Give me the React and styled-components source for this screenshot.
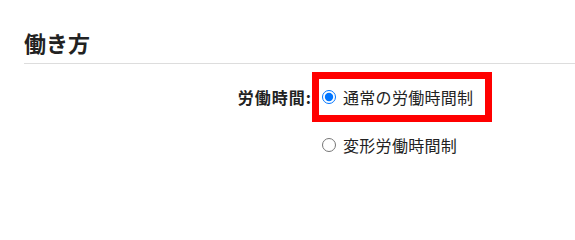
import React, { useState } from "react";
import styled, { createGlobalStyle } from "styled-components";

const GlobalStyle = createGlobalStyle`
  body {
    margin: 0;
    background: #fff;
    font-family: "Noto Sans CJK JP", "Noto Sans", sans-serif;
    color: #222;
  }
`;

const options = [
  { key: "normal", label: "通常の労働時間制" },
  { key: "flex", label: "変形労働時間制" },
];

const App = () => {
  const [select, setSelect] = useState("normal");

  return (
    <SSection>
      <GlobalStyle />
      <SHeading>働き方</SHeading>
      <SForm>
        <SLabel>労働時間:</SLabel>
        <SOptions>
          {options.map((option, i) => (
            <SOption key={option.key} highlight={i === 0}>
              <SRadio
                type="radio"
                name="worktime"
                checked={select === option.key}
                onChange={() => setSelect(option.key)}
              />
              <span>{option.label}</span>
            </SOption>
          ))}
        </SOptions>
      </SForm>
    </SSection>
  );
};

const SSection = styled.div`
  padding-left: 24px;
`;

const SHeading = styled.h2`
  margin: 0;
  padding: 26px 0 5px;
  font-size: 22px;
  line-height: 32px;
  font-weight: 700;
  border-bottom: 1px solid #dddddd;
`;

const SForm = styled.div`
  display: grid;
  grid-template-columns: 287px auto;
  column-gap: 8px;
  margin-top: 15px;
`;

const SLabel = styled.div`
  text-align: right;
  font-size: 16px;
  font-weight: 700;
  line-height: 36px;
  letter-spacing: 1px;
  margin-right: -1px;
`;

const SOptions = styled.div`
  display: flex;
  flex-direction: column;
  align-items: flex-start;
  gap: 12px;
`;

const SOption = styled.label`
  display: flex;
  align-items: center;
  gap: 7px;
  width: 166px;
  height: 36px;
  padding-left: 3px;
  box-sizing: border-box;
  font-size: 16px;
  letter-spacing: 0.3px;
  outline: ${props => props.highlight ? "7px solid #ff0000" : "none"};
`;

const SRadio = styled.input`
  width: 14px;
  height: 14px;
  margin: 0;
`;

export default App;
